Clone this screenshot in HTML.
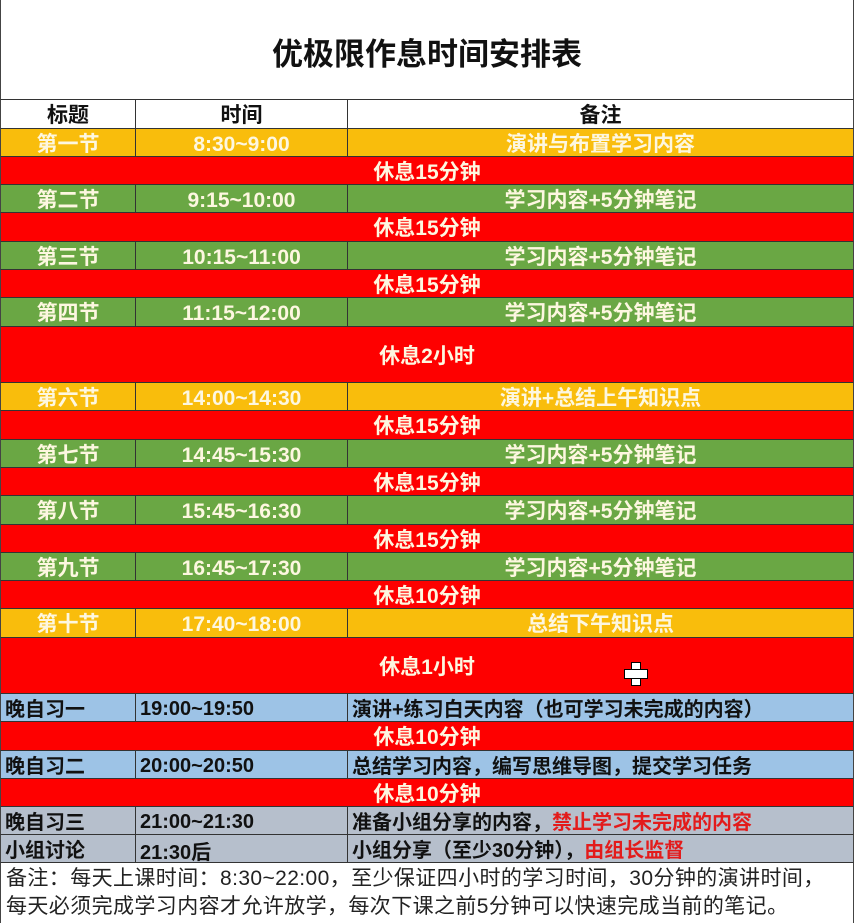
<!DOCTYPE html>
<html><head><meta charset="utf-8"><style>
body{margin:0;width:856px;height:916px;background:#fff;position:relative;overflow:hidden;font-family:"Liberation Sans","Noto Sans CJK SC",sans-serif;}
.r{position:absolute;left:0;width:854px;border-left:1px solid #444;border-right:1px solid #444;border-bottom:1px solid #333;box-sizing:border-box;display:flex;}
.c{box-sizing:border-box;display:flex;align-items:center;justify-content:center;font-size:21px;font-weight:bold;color:#fdf7e0;border-right:1px solid #333;height:100%;}
.c1{width:135px}.c2{width:212px;padding-top:4px}.c3{flex:1;border-right:none}
.o{background:#f9bd0c}.g{background:#6aa744}.rd{background:#fe0000}.b{background:#9dc3e6}.gr{background:#b6bfcc}
.m{width:100%;display:flex;align-items:center;justify-content:center;font-size:21px;font-weight:bold;color:#fdf7e0;}
.dk .c{color:#111;justify-content:flex-start;padding-left:4px;font-weight:bold;font-size:20px}
.dk .c2{padding-top:4px}
.red{color:#e31b1b}
</style></head><body>
<div style="position:absolute;left:0;top:0;width:854px;height:100px;border-left:1px solid #444;border-right:1px solid #444;border-bottom:1px solid #333;box-sizing:border-box;display:flex;align-items:center;justify-content:center;font-size:31px;font-weight:bold;color:#111;padding-top:4px">优极限作息时间安排表</div>
<div class="r" style="top:100px;height:29px;background:#fff"><div class="c c1" style="color:#111">标题</div><div class="c c2" style="color:#111;padding-top:0">时间</div><div class="c c3" style="color:#111">备注</div></div>
<div class="r o" style="top:129px;height:28px"><div class="c c1">第一节</div><div class="c c2">8:30~9:00</div><div class="c c3">演讲与布置学习内容</div></div>
<div class="r rd" style="top:157px;height:28px"><div class="m">休息15分钟</div></div>
<div class="r g" style="top:185px;height:28px"><div class="c c1">第二节</div><div class="c c2">9:15~10:00</div><div class="c c3">学习内容+5分钟笔记</div></div>
<div class="r rd" style="top:213px;height:29px"><div class="m">休息15分钟</div></div>
<div class="r g" style="top:242px;height:28px"><div class="c c1">第三节</div><div class="c c2">10:15~11:00</div><div class="c c3">学习内容+5分钟笔记</div></div>
<div class="r rd" style="top:270px;height:28px"><div class="m">休息15分钟</div></div>
<div class="r g" style="top:298px;height:29px"><div class="c c1">第四节</div><div class="c c2">11:15~12:00</div><div class="c c3">学习内容+5分钟笔记</div></div>
<div class="r rd" style="top:327px;height:56px"><div class="m">休息2小时</div></div>
<div class="r o" style="top:383px;height:28px"><div class="c c1">第六节</div><div class="c c2">14:00~14:30</div><div class="c c3">演讲+总结上午知识点</div></div>
<div class="r rd" style="top:411px;height:29px"><div class="m">休息15分钟</div></div>
<div class="r g" style="top:440px;height:28px"><div class="c c1">第七节</div><div class="c c2">14:45~15:30</div><div class="c c3">学习内容+5分钟笔记</div></div>
<div class="r rd" style="top:468px;height:28px"><div class="m">休息15分钟</div></div>
<div class="r g" style="top:496px;height:29px"><div class="c c1">第八节</div><div class="c c2">15:45~16:30</div><div class="c c3">学习内容+5分钟笔记</div></div>
<div class="r rd" style="top:525px;height:28px"><div class="m">休息15分钟</div></div>
<div class="r g" style="top:553px;height:28px"><div class="c c1">第九节</div><div class="c c2">16:45~17:30</div><div class="c c3">学习内容+5分钟笔记</div></div>
<div class="r rd" style="top:581px;height:28px"><div class="m">休息10分钟</div></div>
<div class="r o" style="top:609px;height:29px"><div class="c c1">第十节</div><div class="c c2">17:40~18:00</div><div class="c c3">总结下午知识点</div></div>
<div class="r rd" style="top:638px;height:56px"><div class="m">休息1小时</div></div>
<div style="position:absolute;left:624px;top:662px;width:24px;height:24px">
<div style="position:absolute;left:7px;top:0;width:10px;height:24px;background:#fff;border:1px solid #000;box-sizing:border-box"></div>
<div style="position:absolute;left:0;top:7px;width:24px;height:10px;background:#fff;border:1px solid #000;box-sizing:border-box"></div>
<div style="position:absolute;left:8px;top:8px;width:8px;height:8px;background:#fff"></div></div>
<div class="r b dk" style="top:694px;height:28px"><div class="c c1">晚自习一</div><div class="c c2">19:00~19:50</div><div class="c c3">演讲+练习白天内容（也可学习未完成的内容）</div></div>
<div class="r rd" style="top:722px;height:29px"><div class="m">休息10分钟</div></div>
<div class="r b dk" style="top:751px;height:28px"><div class="c c1">晚自习二</div><div class="c c2">20:00~20:50</div><div class="c c3">总结学习内容，编写思维导图，提交学习任务</div></div>
<div class="r rd" style="top:779px;height:28px"><div class="m">休息10分钟</div></div>
<div class="r gr dk" style="top:807px;height:28px"><div class="c c1">晚自习三</div><div class="c c2">21:00~21:30</div><div class="c c3">准备小组分享的内容，<span class="red">禁止学习未完成的内容</span></div></div>
<div class="r gr dk" style="top:835px;height:28px"><div class="c c1">小组讨论</div><div class="c c2">21:30后</div><div class="c c3">小组分享（至少30分钟），<span class="red">由组长监督</span></div></div>
<div style="position:absolute;left:0;top:863px;width:854px;height:60px;border-left:1px solid #444;border-right:1px solid #444;box-sizing:border-box;padding:2px 0 0 5px;font-size:21px;letter-spacing:0.4px;line-height:28px;color:#222;white-space:nowrap">备注：每天上课时间：8:30~22:00，至少保证四小时的学习时间，30分钟的演讲时间，<br>每天必须完成学习内容才允许放学，每次下课之前5分钟可以快速完成当前的笔记。</div>
</body></html>
